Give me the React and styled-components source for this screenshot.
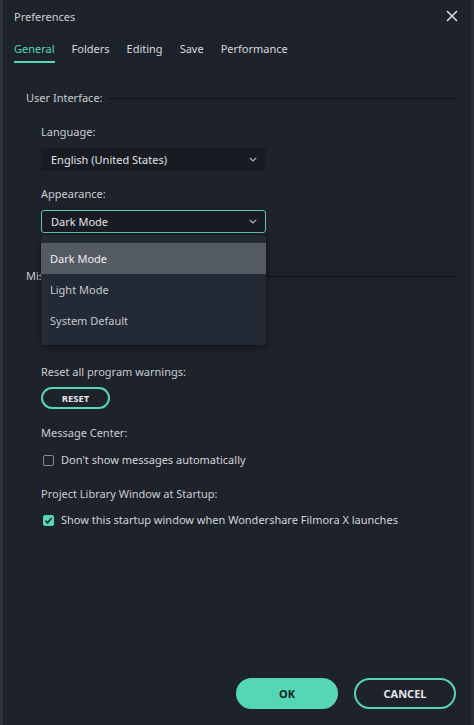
import React from 'react'
import styled, { createGlobalStyle } from 'styled-components'

const teal = '#55d6b7'
const bg = '#1e222a'
const text = '#c9cdd3'

const GlobalStyle = createGlobalStyle`
  html, body {
    margin: 0;
    padding: 0;
    background: ${bg};
  }
  * {
    box-sizing: border-box;
  }
`

const Window = styled.div`
  position: relative;
  width: 474px;
  height: 725px;
  background: ${bg};
  box-shadow: inset 3px 0 0 #2f343c, inset -3px 0 0 #2a2e36;
  font-family: 'Noto Sans', 'Open Sans', sans-serif;
  font-size: 11px;
  color: ${text};
  display: flex;
  flex-direction: column;
`

const TitleBar = styled.div`
  height: 32px;
  display: flex;
  align-items: center;
  justify-content: space-between;
  padding: 0 16px 0 14px;
  font-size: 11px;
  color: #cdd0d5;
`

const CloseButton = styled.svg`
  width: 12px;
  height: 12px;
  stroke: #d8dbe0;
  stroke-width: 1.6;
`

const Tabs = styled.div`
  display: flex;
  gap: 17px;
  padding: 8px 0 0 14px;
`

const Tab = styled.div`
  font-size: 11px;
  line-height: 18px;
  padding-bottom: 3px;
  border-bottom: 2px solid ${p => (p.$active ? teal : 'transparent')};
  color: ${p => (p.$active ? teal : '#d6d9de')};
`

const Content = styled.div`
  flex: 1;
  padding: 26px 18px 0 26px;
  display: flex;
  flex-direction: column;
`

const SectionHeader = styled.div`
  display: flex;
  align-items: center;
  gap: 6px;
  line-height: 18px;
  margin-top: ${p => p.$mt || 0}px;

  &::after {
    content: '';
    flex: 1;
    border-top: 1px solid #0e1014;
  }
`

const Group = styled.div`
  padding-left: 15px;
  display: flex;
  flex-direction: column;
`

const Label = styled.div`
  line-height: 18px;
  margin-top: ${p => p.$mt || 0}px;
`

const SelectWrap = styled.div`
  position: relative;
  width: 225px;
  margin-top: 7px;
`

const Select = styled.div`
  height: 23px;
  display: flex;
  align-items: center;
  justify-content: space-between;
  padding: 0 8px 0 9px;
  background: #181b21;
  border: 1px solid ${p => (p.$focused ? '#5fc7ae' : 'transparent')};
  border-radius: 3px;
  color: #e1e4e8;
`

const Chevron = styled.svg`
  width: 8px;
  height: 5px;
  stroke: #b8bcc2;
  stroke-width: 1.2;
  fill: none;
`

const Menu = styled.div`
  position: absolute;
  top: calc(100% + 2px);
  left: 0;
  width: 100%;
  padding: 8px 0 9px;
  background: #232a36;
  border-radius: 3px;
  box-shadow: 0 2px 6px rgba(0, 0, 0, 0.45);
  z-index: 10;
`

const MenuItem = styled.div`
  height: 31px;
  display: flex;
  align-items: center;
  padding-left: 9px;
  background: ${p => (p.$selected ? '#545a62' : 'transparent')};
  color: ${p => (p.$selected ? '#eef0f2' : '#c5c9cf')};
`

const PillButton = styled.button`
  font-family: inherit;
  font-weight: 700;
  font-size: ${p => (p.$large ? 11 : 9.5)}px;
  width: ${p => p.$w}px;
  height: ${p => p.$h}px;
  margin-top: ${p => p.$mt || 0}px;
  border-radius: 999px;
  border: 2px solid ${teal};
  background: ${p => (p.$primary ? teal : 'transparent')};
  color: ${p => (p.$primary ? '#14231f' : '#e6e8eb')};
  padding: 0;
`

const CheckRow = styled.label`
  display: flex;
  align-items: center;
  gap: 7px;
  line-height: 18px;
  padding-left: 2px;
  margin-top: ${p => p.$mt || 0}px;
  color: #d2d5da;
`

const Box = styled.span`
  width: 11px;
  height: 11px;
  border-radius: 2px;
  border: 1px solid ${p => (p.$checked ? teal : '#858a92')};
  background: ${p => (p.$checked ? teal : 'transparent')};
  display: flex;
  align-items: center;
  justify-content: center;
`

const Footer = styled.div`
  display: flex;
  justify-content: flex-end;
  gap: 16px;
  padding: 0 18px 16px 0;
`

const ChevronIcon = () => (
  <Chevron viewBox="0 0 8 5">
    <path d="M0.8 0.8 L4 4 L7.2 0.8" />
  </Chevron>
)

export default function App() {
  return (
    <Window>
      <GlobalStyle />
      <TitleBar>
        <span>Preferences</span>
        <CloseButton viewBox="0 0 12 12">
          <path d="M1 1 L11 11 M11 1 L1 11" />
        </CloseButton>
      </TitleBar>
      <Tabs>
        <Tab $active>General</Tab>
        <Tab>Folders</Tab>
        <Tab>Editing</Tab>
        <Tab>Save</Tab>
        <Tab>Performance</Tab>
      </Tabs>
      <Content>
        <SectionHeader>User Interface:</SectionHeader>
        <Group>
          <Label $mt={16}>Language:</Label>
          <SelectWrap>
            <Select>
              <span>English (United States)</span>
              <ChevronIcon />
            </Select>
          </SelectWrap>
          <Label $mt={14}>Appearance:</Label>
          <SelectWrap>
            <Select $focused>
              <span>Dark Mode</span>
              <ChevronIcon />
            </Select>
            <Menu>
              <MenuItem $selected>Dark Mode</MenuItem>
              <MenuItem>Light Mode</MenuItem>
              <MenuItem>System Default</MenuItem>
            </Menu>
          </SelectWrap>
        </Group>
        <SectionHeader $mt={34}>Miscellaneous:</SectionHeader>
        <Group>
          <Label $mt={78}>Reset all program warnings:</Label>
          <PillButton $w={69} $h={22} $mt={6}>
            RESET
          </PillButton>
          <Label $mt={15}>Message Center:</Label>
          <CheckRow $mt={9}>
            <Box />
            Don't show messages automatically
          </CheckRow>
          <Label $mt={16}>Project Library Window at Startup:</Label>
          <CheckRow $mt={8}>
            <Box $checked>
              <svg width="9" height="9" viewBox="0 0 9 9">
                <path d="M1.5 4.6 L3.6 6.7 L7.6 2" stroke="#1b2622" strokeWidth="1.6" fill="none" />
              </svg>
            </Box>
            Show this startup window when Wondershare Filmora X launches
          </CheckRow>
        </Group>
      </Content>
      <Footer>
        <PillButton $primary $large $w={102} $h={31}>
          OK
        </PillButton>
        <PillButton $large $w={102} $h={31}>
          CANCEL
        </PillButton>
      </Footer>
    </Window>
  )
}
